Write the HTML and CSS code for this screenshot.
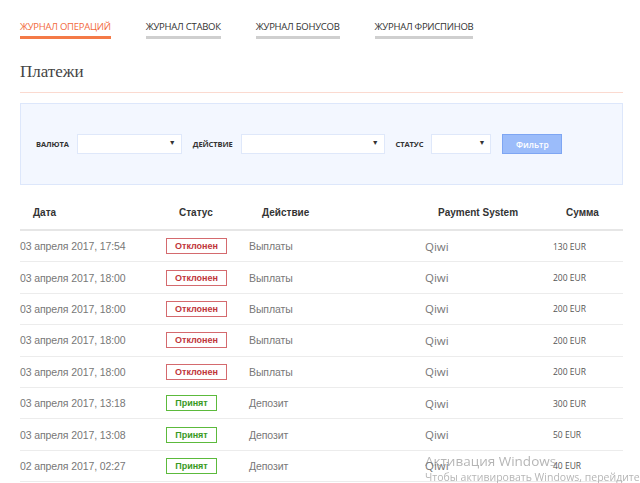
FILE: index.html
```html
<!DOCTYPE html>
<html lang="ru">
<head>
<meta charset="utf-8">
<link rel="stylesheet" href="styles.css">
</head>
<body>
<div class="page">
  <nav class="tabs">
    <a class="tab active">ЖУРНАЛ ОПЕРАЦИЙ</a>
    <a class="tab">ЖУРНАЛ СТАВОК</a>
    <a class="tab">ЖУРНАЛ БОНУСОВ</a>
    <a class="tab">ЖУРНАЛ ФРИСПИНОВ</a>
  </nav>
  <h1 class="title">Платежи</h1>
  <div class="filter">
    <span class="flabel">ВАЛЮТА</span>
    <div class="select w-cur"><span class="caret">▼</span></div>
    <span class="flabel">ДЕЙСТВИЕ</span>
    <div class="select w-act"><span class="caret">▼</span></div>
    <span class="flabel">СТАТУС</span>
    <div class="select w-st"><span class="caret">▼</span></div>
    <button class="btn">Фильтр</button>
  </div>
  <table class="grid">
    <colgroup>
      <col class="c-date"><col class="c-status"><col class="c-act"><col class="c-ps"><col class="c-sum">
    </colgroup>
    <thead>
      <tr><th>Дата</th><th>Статус</th><th>Действие</th><th>Payment System</th><th>Сумма</th></tr>
    </thead>
    <tbody>
      <tr><td>03 апреля 2017, 17:54</td><td><span class="badge bad">Отклонен</span></td><td>Выплаты</td><td class="ps">Qiwi</td><td class="sum">130 EUR</td></tr>
      <tr><td>03 апреля 2017, 18:00</td><td><span class="badge bad">Отклонен</span></td><td>Выплаты</td><td class="ps">Qiwi</td><td class="sum">200 EUR</td></tr>
      <tr><td>03 апреля 2017, 18:00</td><td><span class="badge bad">Отклонен</span></td><td>Выплаты</td><td class="ps">Qiwi</td><td class="sum">200 EUR</td></tr>
      <tr><td>03 апреля 2017, 18:00</td><td><span class="badge bad">Отклонен</span></td><td>Выплаты</td><td class="ps">Qiwi</td><td class="sum">200 EUR</td></tr>
      <tr><td>03 апреля 2017, 18:00</td><td><span class="badge bad">Отклонен</span></td><td>Выплаты</td><td class="ps">Qiwi</td><td class="sum">200 EUR</td></tr>
      <tr><td>03 апреля 2017, 13:18</td><td><span class="badge ok">Принят</span></td><td>Депозит</td><td class="ps">Qiwi</td><td class="sum">300 EUR</td></tr>
      <tr><td>03 апреля 2017, 13:08</td><td><span class="badge ok">Принят</span></td><td>Депозит</td><td class="ps">Qiwi</td><td class="sum">50 EUR</td></tr>
      <tr><td>02 апреля 2017, 02:27</td><td><span class="badge ok">Принят</span></td><td>Депозит</td><td class="ps">Qiwi</td><td class="sum">40 EUR</td></tr>
    </tbody>
  </table>
</div>
<div class="winmark">
  <div class="wm1">Активация Windows</div>
  <div class="wm2">Чтобы активировать Windows, перейдите в</div>
</div>
</body>
</html>
```

FILE: styles.css
```css
html, body {
  margin: 0;
  padding: 0;
  background: #fff;
  overflow: hidden;
}
body {
  font-family: "Liberation Sans", Arial, sans-serif;
  color: #333;
}
.page {
  padding: 18px 17px 0 20px;
}
.tabs {
  display: flex;
  gap: 35px;
}
.tab {
  font-family: "Open Sans", sans-serif;
  font-size: 9.5px;
  letter-spacing: -0.25px;
  color: #333;
  padding-top: 2px;
  padding-bottom: 2px;
  border-bottom: 3px solid #cfcfcf;
  line-height: 14px;
}
.tab.active {
  color: #f26a3d;
  border-bottom-color: #f47a47;
}
.title {
  font-family: "Liberation Serif", serif;
  font-weight: normal;
  font-size: 17px;
  color: #444;
  margin: 23px 0 0;
  line-height: 20px;
  padding-bottom: 10px;
  border-bottom: 1px solid #fbdad0;
}
.filter {
  margin-top: 10px;
  height: 80px;
  background: #f3f7ff;
  border: 1px solid #dde7fb;
  display: flex;
  align-items: center;
  padding-left: 15px;
}
.flabel {
  font-family: "Open Sans", sans-serif;
  font-weight: bold;
  font-size: 7.5px;
  letter-spacing: -0.1px;
  color: #333;
  margin-right: 8px;
}
.select {
  height: 20px;
  box-sizing: border-box;
  background: #fff;
  border: 1px solid #dfe8fa;
  position: relative;
  margin-right: 11px;
}
.w-cur { width: 105px; }
.w-act { width: 144px; }
.w-st { width: 60px; }
.caret {
  position: absolute;
  right: 5px;
  top: 4px;
  font-size: 7px;
  color: #333;
}
.btn {
  width: 60px;
  height: 20px;
  background: #9bbcfa;
  border: 1px solid #7ea6f3;
  color: #fff;
  font-family: "Open Sans", sans-serif;
  font-size: 8.5px;
  font-weight: 600;
  padding: 0;
}
.grid {
  margin-top: 10px;
  width: 603px;
  border-collapse: collapse;
  table-layout: fixed;
}
.c-date { width: 146px; }
.c-status { width: 83px; }
.c-act { width: 176px; }
.c-ps { width: 128px; }
.c-sum { width: 70px; }
.grid th {
  text-align: left;
  font-size: 10px;
  font-weight: bold;
  color: #333;
  height: 34px;
  padding: 0 0 0 13px;
  border-bottom: 2px solid #e6e6e6;
}
.grid td {
  font-size: 10.5px;
  letter-spacing: -0.1px;
  color: #777;
  height: 30.4px;
  padding: 0;
  border-bottom: 1px solid #ececec;
}
.grid td.ps {
  font-family: "Open Sans", sans-serif;
  font-size: 11.5px;
  letter-spacing: 0;
}
.grid td.sum {
  font-family: "Open Sans", sans-serif;
  font-size: 8.5px;
  letter-spacing: 0;
  color: #555;
}
.badge {
  display: inline-block;
  box-sizing: border-box;
  height: 16px;
  line-height: 14px;
  text-align: center;
  font-size: 9px;
  font-weight: bold;
  letter-spacing: 0;
  border: 1px solid;
  vertical-align: middle;
}
.badge.bad {
  width: 61px;
  color: #c0353a;
  border-color: #d46a6e;
}
.badge.ok {
  width: 51px;
  color: #3a9a1f;
  border-color: #5cba3c;
}
.winmark {
  position: fixed;
  left: 425px;
  top: 452px;
  white-space: nowrap;
  font-family: "Open Sans", sans-serif;
  color: rgba(120, 120, 120, 0.55);
}
.wm1 {
  font-size: 13.5px;
  line-height: 18px;
}
.wm2 {
  font-size: 10.5px;
  line-height: 14px;
}
```
